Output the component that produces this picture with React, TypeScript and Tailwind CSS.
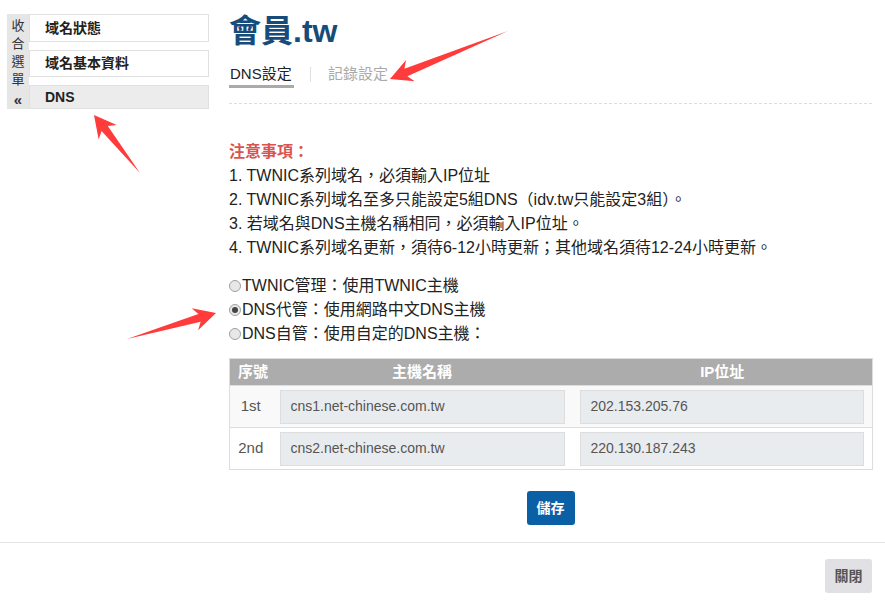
import React from 'react'

const font = "font-['Liberation_Sans','Noto_Sans_CJK_TC',sans-serif]"

// 標註用的紅色箭頭：tail -> tip
function arrowPoints(tx: number, ty: number, px: number, py: number) {
	const L = 22
	const h = 11.5
	const s = 4
	const dx = px - tx
	const dy = py - ty
	const len = Math.sqrt(dx * dx + dy * dy)
	const ux = dx / len
	const uy = dy / len
	const nx = -uy
	const ny = ux
	const bx = px - ux * L
	const by = py - uy * L
	const ix = px - ux * L * 0.78
	const iy = py - uy * L * 0.78
	const pts = [
		[tx, ty],
		[ix + nx * s, iy + ny * s],
		[bx + nx * h, by + ny * h],
		[px, py],
		[bx - nx * h, by - ny * h],
		[ix - nx * s, iy - ny * s]
	]
	return pts.map((p) => p.join(',')).join(' ')
}

const Radio = ({ checked, label }: { checked?: boolean; label: string }) => (
	<div className="flex items-center h-6">
		<span className="w-[12px] h-[12px] rounded-full border border-[#a0a0a0] bg-[#e8e8e8] flex items-center justify-center mr-px">
			{checked && <span className="w-[6px] h-[6px] rounded-full bg-[#444]" />}
		</span>
		<span>{label}</span>
	</div>
)

const rows = [
	{ no: '1st', host: 'cns1.net-chinese.com.tw', ip: '202.153.205.76', bg: 'bg-[#f9f9f9]' },
	{ no: '2nd', host: 'cns2.net-chinese.com.tw', ip: '220.130.187.243', bg: 'bg-white' }
]

export default function App() {
	return (
		<div className={`relative w-[885px] h-[604px] bg-white overflow-hidden text-[#222] ${font}`}>
			<div className="flex">
				{/* 側邊選單 */}
				<div className="w-[229px] shrink-0 pl-[7px] pt-[14px]">
					<div className="flex w-[202px]">
						<div className="w-[22px] bg-[#e6e6e6] flex flex-col items-center pt-[3px] text-[13px] leading-[18px] text-[#333]">
							<span>收</span>
							<span>合</span>
							<span>選</span>
							<span>單</span>
							<span className="font-bold text-[15px] leading-[17px] mt-[2px]">«</span>
						</div>
						<div className="flex-1 flex flex-col gap-2 text-[14px] font-bold">
							<div className="h-[28px] border border-[#e0e0e0] flex items-center pl-[15px]">域名狀態</div>
							<div className="h-[27px] border border-[#e0e0e0] flex items-center pl-[15px]">域名基本資料</div>
							<div className="h-[24px] border border-[#e0e0e0] bg-[#ececec] flex items-center pl-[15px]">DNS</div>
						</div>
					</div>
				</div>

				{/* 主要內容 */}
				<div className="w-[643px] pt-[13px] pb-[17px]">
					<h1 className="text-[32px] leading-[36px] font-bold text-[#174b7a]">會員.tw</h1>
					<div className="flex items-start mt-[15px] text-[15px] leading-[20px]">
						<div className="pb-px border-b-[3px] border-[#aaa] w-[65px] pl-px">DNS設定</div>
						<div className="w-px h-[15px] bg-[#e0e0e0] ml-[16px] mt-[3px]" />
						<div className="ml-[17px] text-[#aaa]">記錄設定</div>
					</div>
					<div className="mt-[15px] border-t border-dashed border-[#ddd]" />

					<div className="mt-[36px] text-[16px] leading-[24px]">
						<div className="font-bold text-[#d9534f]">注意事項：</div>
						<div>1. TWNIC系列域名，必須輸入IP位址</div>
						<div>2. TWNIC系列域名至多只能設定5組DNS（idv.tw只能設定3組）。</div>
						<div>3. 若域名與DNS主機名稱相同，必須輸入IP位址。</div>
						<div>4. TWNIC系列域名更新，須待6-12小時更新；其他域名須待12-24小時更新。</div>
					</div>

					<div className="mt-[14px] text-[16px]">
						<Radio label="TWNIC管理：使用TWNIC主機" />
						<Radio checked label="DNS代管：使用網路中文DNS主機" />
						<Radio label="DNS自管：使用自定的DNS主機：" />
					</div>

					<table className="mt-[12px] w-[643px] border-collapse border border-[#ddd] table-fixed">
						<colgroup>
							<col className="w-[42px]" />
							<col className="w-[301px]" />
							<col className="w-[300px]" />
						</colgroup>
						<thead>
							<tr className="h-[27px] bg-[#acacac] text-white text-[15px] font-bold">
								<th className="text-left pl-[8px] font-bold">序號</th>
								<th className="font-bold">主機名稱</th>
								<th className="font-bold">IP位址</th>
							</tr>
						</thead>
						<tbody>
							{rows.map((r) => (
								<tr key={r.no} className={`h-[42px] border-t border-[#ddd] ${r.bg}`}>
									<td className="text-center text-[15px] text-[#555]">{r.no}</td>
									<td className="px-[8px]">
										<div className="h-[34px] bg-[#e9ecef] border border-[#ddd] flex items-center pl-[10px] text-[14px] text-[#555]">
											{r.host}
										</div>
									</td>
									<td className="pl-[7px] pr-[8px]">
										<div className="h-[34px] bg-[#e9ecef] border border-[#ddd] flex items-center pl-[10px] text-[14px] text-[#555]">
											{r.ip}
										</div>
									</td>
								</tr>
							))}
						</tbody>
					</table>

					<div className="mt-[21px] flex justify-center">
						<button className="w-[48px] h-[34px] rounded-[3px] bg-[#0b5fa5] text-white text-[14px] font-bold">儲存</button>
					</div>
				</div>
			</div>

			<div className="border-t border-[#e5e5e5] flex justify-end pr-[13px] pt-[16px]">
				<button className="w-[47px] h-[34px] rounded-[3px] bg-[#e1e1e3] text-[#555] text-[14px] font-bold">關閉</button>
			</div>

			{/* 紅色標註箭頭 */}
			<svg className="absolute inset-0 pointer-events-none" width="885" height="604">
				<polygon points={arrowPoints(508, 31, 390, 79)} fill="#ff3b3b" />
				<polygon points={arrowPoints(140, 173, 94, 115)} fill="#ff3b3b" />
				<polygon points={arrowPoints(127, 339, 216, 313)} fill="#ff3b3b" />
			</svg>
		</div>
	)
}
